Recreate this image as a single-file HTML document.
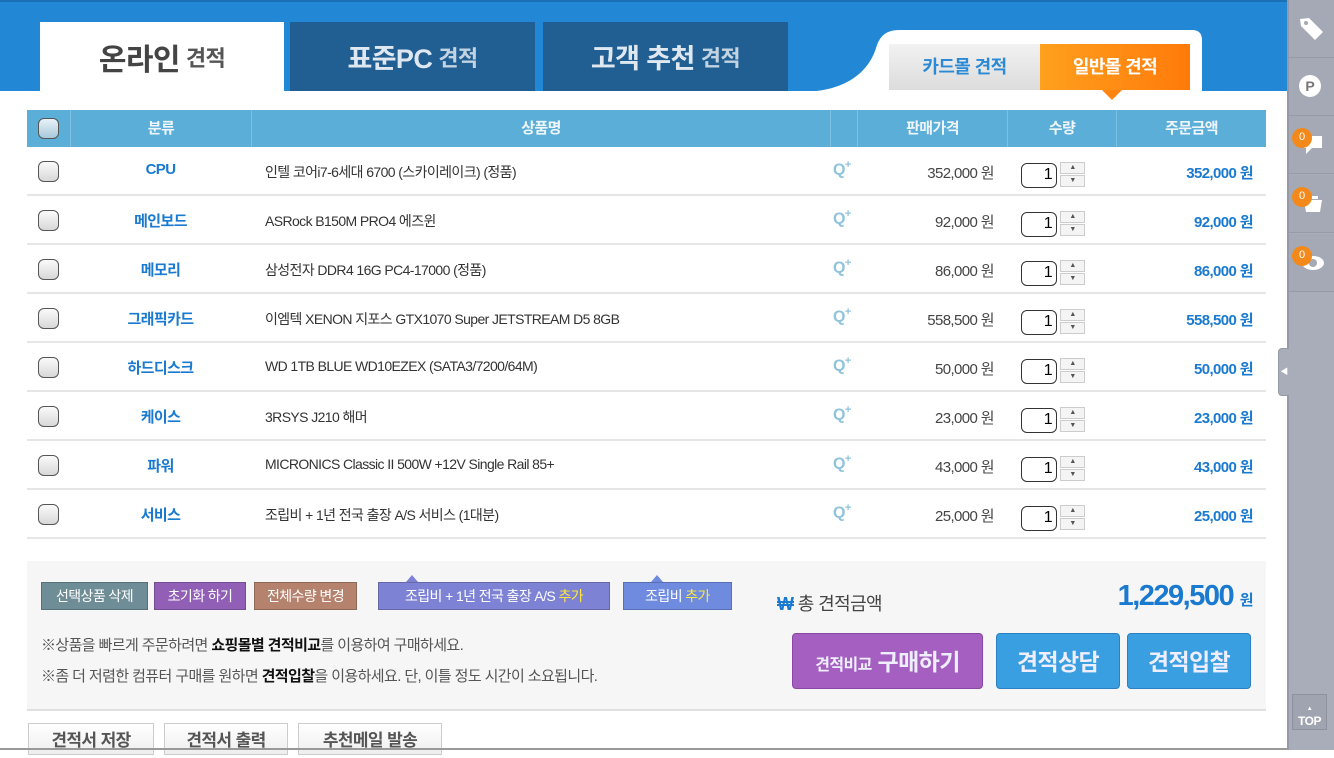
<!DOCTYPE html>
<html><head><meta charset="utf-8"><style>
*{margin:0;padding:0;box-sizing:border-box}
body{width:1334px;height:750px;overflow:hidden;background:#fff;font-family:"Liberation Sans","Noto Sans CJK KR",sans-serif;position:relative;letter-spacing:-0.6px}
.abs{position:absolute}
.hdr{left:0;top:0;width:1287px;height:91px;background:#2287d5;border-top:2px solid #1a6fb5}
.tab{top:22px;height:69px;display:flex;align-items:center;justify-content:center;font-weight:bold;color:#dfe8f0;font-size:27px}
.tab small{font-size:22px;font-weight:bold;margin-left:6px;opacity:.85}
.th{top:110px;height:37px;background:#5aaed8;left:27px;width:1239px}
.th div{position:absolute;top:0;height:37px;line-height:37px;text-align:center;color:#eef6fb;font-size:15px;font-weight:bold;border-left:1px solid #7cc0e2}
.cb{position:absolute;left:11px;top:14px;width:21px;height:21px;border:1.5px solid #555;border-radius:6px;background:linear-gradient(#fafafa,#d8d8d8)}
.row{position:absolute;left:27px;width:1239px;height:49px;border-bottom:2px solid #e6e6e6}
.row>span{position:absolute}
.cat{left:43px;width:181px;text-align:center;top:14px;color:#1a7ad0;font-weight:bold;font-size:15px}
.nm{left:238px;top:15px;font-size:14px;color:#333}
.q{left:806px;top:12px;color:#8fc3dc;font-weight:bold;font-size:16px}
.q sup{font-size:11px}
.pr{right:272px;top:15px;font-size:15px;color:#444}
.qty{left:994px;top:16px;width:36px;height:25px;border:1.5px solid #333;border-radius:6px;text-align:right;padding-right:4px;font-size:16px;line-height:22px;color:#000}
.sp{left:1033px;width:25px;height:12px;border:1px solid #ccc;background:#f4f4f4;font-size:7px;text-align:center;line-height:10px;color:#555}
.tot{right:13px;top:15px;font-size:15px;color:#1a7ad0;font-weight:bold}
.btn{top:582px;height:28px;color:#fff;font-size:14px;line-height:26px;text-align:center;border:1px solid rgba(0,0,0,.2)}
.bb{top:723px;height:32px;background:linear-gradient(#fff,#eee);border:1px solid #ccc;font-size:17px;font-weight:bold;color:#555;text-align:center;line-height:34px}
.sb{left:1287px;top:0;width:47px;height:750px;background:#a9adb9;border-left:2px solid #959aa6}
.sbs{left:1289px;width:45px;height:58px;border-bottom:1px solid #979ba7;background:#a5a9b5}
.badge{position:absolute;width:20px;height:20px;border-radius:50%;background:#f3891a;color:#fff;font-size:11px;text-align:center;line-height:18px;letter-spacing:0}
.big{top:633px;height:56px;color:#eef;font-weight:bold;font-size:23px;text-align:center;line-height:56px;border-radius:4px}
.tri{width:0;height:0;border-left:6px solid transparent;border-right:6px solid transparent}
</style></head><body>
<div class="abs hdr"></div>
<div class="abs tab" style="left:40px;width:244px;background:#fff;color:#444;font-size:30px">온라인<small style="color:#555;opacity:1">견적</small></div>
<div class="abs tab" style="left:290px;width:245px;background:#215f93">표준PC<small>견적</small></div>
<div class="abs tab" style="left:543px;width:245px;background:#215f93">고객 추천<small>견적</small></div>
<svg class="abs" style="left:800px;top:28px" width="410" height="64"><path d="M0 64 C50 64 70 40 76 20 C80 6 88 2 100 2 L392 2 Q402 2 402 12 L402 64 Z" fill="#fff"/></svg>
<div class="abs" style="left:889px;top:44px;width:151px;height:46px;background:linear-gradient(#f2f2f2,#dcdcdc);color:#2a8ad6;font-weight:bold;font-size:18px;text-align:center;line-height:46px">카드몰 견적</div>
<div class="abs" style="left:1040px;top:44px;width:150px;height:46px;background:linear-gradient(90deg,#ffa01e,#ff7a0a);color:#fff;font-weight:bold;font-size:18px;text-align:center;line-height:46px">일반몰 견적</div>
<div class="abs" style="left:1102px;top:90px;width:0;height:0;border-left:10px solid transparent;border-right:10px solid transparent;border-top:10px solid #ff8410"></div>

<div class="abs th">
<div style="left:0;width:43px;border:0"><span class="cb" style="top:8px;background:linear-gradient(#e8f2f8,#a8c8da)"></span></div>
<div style="left:43px;width:181px">분류</div>
<div style="left:224px;width:579px">상품명</div>
<div style="left:803px;width:27px"></div>
<div style="left:830px;width:150px">판매가격</div>
<div style="left:980px;width:109px">수량</div>
<div style="left:1089px;width:150px">주문금액</div>
</div>

<div class="row" style="top:147px"><span class="cb"></span><span class="cat">CPU</span><span class="nm">인텔 코어i7-6세대 6700 (스카이레이크) (정품)</span><span class="q">Q<sup>+</sup></span><span class="pr">352,000 원</span><span class="qty">1</span><span class="sp" style="top:15px">▲</span><span class="sp" style="top:28px">▼</span><span class="tot">352,000 원</span></div>
<div class="row" style="top:196px"><span class="cb"></span><span class="cat">메인보드</span><span class="nm">ASRock B150M PRO4 에즈윈</span><span class="q">Q<sup>+</sup></span><span class="pr">92,000 원</span><span class="qty">1</span><span class="sp" style="top:15px">▲</span><span class="sp" style="top:28px">▼</span><span class="tot">92,000 원</span></div>
<div class="row" style="top:245px"><span class="cb"></span><span class="cat">메모리</span><span class="nm">삼성전자 DDR4 16G PC4-17000 (정품)</span><span class="q">Q<sup>+</sup></span><span class="pr">86,000 원</span><span class="qty">1</span><span class="sp" style="top:15px">▲</span><span class="sp" style="top:28px">▼</span><span class="tot">86,000 원</span></div>
<div class="row" style="top:294px"><span class="cb"></span><span class="cat">그래픽카드</span><span class="nm">이엠텍 XENON 지포스 GTX1070 Super JETSTREAM D5 8GB</span><span class="q">Q<sup>+</sup></span><span class="pr">558,500 원</span><span class="qty">1</span><span class="sp" style="top:15px">▲</span><span class="sp" style="top:28px">▼</span><span class="tot">558,500 원</span></div>
<div class="row" style="top:343px"><span class="cb"></span><span class="cat">하드디스크</span><span class="nm">WD 1TB BLUE WD10EZEX (SATA3/7200/64M)</span><span class="q">Q<sup>+</sup></span><span class="pr">50,000 원</span><span class="qty">1</span><span class="sp" style="top:15px">▲</span><span class="sp" style="top:28px">▼</span><span class="tot">50,000 원</span></div>
<div class="row" style="top:392px"><span class="cb"></span><span class="cat">케이스</span><span class="nm">3RSYS J210 해머</span><span class="q">Q<sup>+</sup></span><span class="pr">23,000 원</span><span class="qty">1</span><span class="sp" style="top:15px">▲</span><span class="sp" style="top:28px">▼</span><span class="tot">23,000 원</span></div>
<div class="row" style="top:441px"><span class="cb"></span><span class="cat">파워</span><span class="nm">MICRONICS Classic II 500W +12V Single Rail 85+</span><span class="q">Q<sup>+</sup></span><span class="pr">43,000 원</span><span class="qty">1</span><span class="sp" style="top:15px">▲</span><span class="sp" style="top:28px">▼</span><span class="tot">43,000 원</span></div>
<div class="row" style="top:490px"><span class="cb"></span><span class="cat">서비스</span><span class="nm">조립비 + 1년 전국 출장 A/S 서비스 (1대분)</span><span class="q">Q<sup>+</sup></span><span class="pr">25,000 원</span><span class="qty">1</span><span class="sp" style="top:15px">▲</span><span class="sp" style="top:28px">▼</span><span class="tot">25,000 원</span></div>

<div class="abs" style="left:27px;top:561px;width:1239px;height:150px;background:#f6f6f6;border-bottom:2px solid #e0e0e0"></div>
<div class="abs btn" style="left:41px;width:107px;background:#6f8d96">선택상품 삭제</div>
<div class="abs btn" style="left:154px;width:92px;background:#9160b6">초기화 하기</div>
<div class="abs btn" style="left:254px;width:103px;background:#b5826e">전체수량 변경</div>
<div class="abs btn" style="left:378px;width:232px;background:#7d82d4">조립비 + 1년 전국 출장 A/S <span style="color:#ffea3a">추가</span></div>
<div class="abs tri" style="left:406px;top:575px;border-bottom:7px solid #7d82d4"></div>
<div class="abs btn" style="left:623px;width:109px;background:#6f8be0">조립비 <span style="color:#ffea3a">추가</span></div>
<div class="abs tri" style="left:651px;top:575px;border-bottom:7px solid #6f8be0"></div>
<div class="abs" style="left:41px;top:634px;font-size:15px;color:#555">※상품을 빠르게 주문하려면 <b style="color:#111">쇼핑몰별 견적비교</b>를 이용하여 구매하세요.</div>
<div class="abs" style="left:41px;top:665px;font-size:15px;color:#555">※좀 더 저렴한 컴퓨터 구매를 원하면 <b style="color:#111">견적입찰</b>을 이용하세요. 단, 이틀 정도 시간이 소요됩니다.</div>
<div class="abs" style="left:777px;top:590px;font-size:18px;color:#444"><b style="color:#1a7ad0">₩</b> 총 견적금액</div>
<div class="abs" style="left:1060px;top:580px;width:192px;text-align:right;font-size:29px;color:#1a7ad0;font-weight:bold;letter-spacing:-1.5px">1,229,500 <span style="font-size:15px">원</span></div>
<div class="abs big" style="left:792px;width:191px;background:#a45fc0;border:1px solid #8a48a6"><span style="font-size:16px">견적비교</span> 구매하기</div>
<div class="abs big" style="left:996px;width:124px;background:#3a9fe0;border:1px solid #2a80c0">견적상담</div>
<div class="abs big" style="left:1127px;width:124px;background:#3a9fe0;border:1px solid #2a80c0">견적입찰</div>
<div class="abs bb" style="left:28px;width:126px">견적서 저장</div>
<div class="abs bb" style="left:164px;width:124px">견적서 출력</div>
<div class="abs bb" style="left:298px;width:144px">추천메일 발송</div>
<div class="abs" style="left:0;top:748px;width:1334px;height:2px;background:#999"></div>

<div class="abs sb"></div>
<div class="abs sbs" style="top:0"></div>
<div class="abs sbs" style="top:58px"></div>
<div class="abs sbs" style="top:116px"></div>
<div class="abs sbs" style="top:175px"></div>
<div class="abs sbs" style="top:234px"></div>
<svg class="abs" style="left:1297px;top:14px" width="30" height="30"><path d="M3 5 L12 4 L26 18 L18 26 L4 12 Z" fill="#fff"/><circle cx="9" cy="9" r="2" fill="#a5a9b5"/></svg>
<div class="abs" style="left:1299px;top:75px;width:22px;height:22px;border-radius:50%;background:#fff;color:#777;font-weight:bold;font-size:14px;text-align:center;line-height:22px;letter-spacing:0">P</div>
<svg class="abs" style="left:1300px;top:132px" width="26" height="26"><path d="M4 4 H22 V16 H12 L6 22 V16 H4Z" fill="#fff"/></svg>
<div class="badge" style="left:1292px;top:128px">0</div>
<svg class="abs" style="left:1300px;top:190px" width="26" height="26"><path d="M4 10 H22 L20 22 H6Z M8 6 H18 V9 H8Z" fill="#fff"/></svg>
<div class="badge" style="left:1292px;top:187px">0</div>
<svg class="abs" style="left:1300px;top:250px" width="26" height="26"><ellipse cx="13" cy="13" rx="11" ry="7" fill="#fff"/><circle cx="13" cy="13" r="4" fill="#a5a9b5"/></svg>
<div class="badge" style="left:1292px;top:246px">0</div>
<div class="abs" style="left:1278px;top:348px;width:11px;height:48px;background:#a9adb9;border:1px solid #959aa6;border-right:0;border-radius:4px 0 0 4px;color:#fff;font-size:8px;line-height:46px;text-align:center">◀</div>
<div class="abs" style="left:1292px;top:694px;width:35px;height:36px;background:#a0a4b0;border:1px solid #8e929e;color:#fff;font-weight:bold;font-size:12px;text-align:center;line-height:12px;padding-top:5px;letter-spacing:-0.5px;overflow:hidden"><span style="font-size:6px">▲</span><br>TOP</div>
</body></html>
